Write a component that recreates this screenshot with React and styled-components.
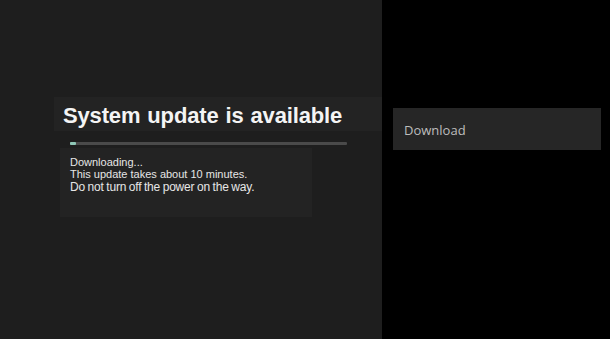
import React from 'react'
import styled, { createGlobalStyle } from 'styled-components'

const Global = createGlobalStyle`
  html, body { margin: 0; padding: 0; background: #000; }
  #root { height: 339px; }
`

const Screen = styled.div`
  display: flex;
  width: 610px;
  height: 339px;
  overflow: hidden;
  font-family: "Liberation Sans", Arial, sans-serif;
`

const LeftPanel = styled.div`
  width: 382px;
  background: #1e1e1e;
  display: flex;
  flex-direction: column;
  padding-top: 97px;
  box-sizing: border-box;
`

const TitleBar = styled.div`
  margin-left: 54px;
  height: 34px;
  background: #232323;
  display: flex;
  align-items: center;
  padding: 3px 0 0 9px;
  box-sizing: border-box;
`

const Title = styled.h1`
  margin: 0;
  font-size: 22px;
  font-weight: bold;
  color: #f4f4f4;
  letter-spacing: -0.15px;
  word-spacing: 1px;
`

const Progress = styled.div`
  margin: 11px 0 0 70px;
  width: 277px;
  height: 3px;
  background: #4a4a4a;
  border-radius: 1px;
`

const ProgressFill = styled.div`
  height: 100%;
  background: #8fc7b7;
  border-radius: 1px;
`

const InfoBox = styled.div`
  margin: 3px 0 0 60px;
  width: 252px;
  height: 69px;
  background: #232323;
  padding: 8px 0 0 10px;
  box-sizing: border-box;
  color: #e6e6e6;
`

const InfoLine = styled.div`
  font-size: ${p => p.$size || 11}px;
  line-height: ${p => p.$lh || 12}px;
  letter-spacing: ${p => p.$ls || 0}px;
  word-spacing: ${p => p.$ws || 0}px;
`

const RightPanel = styled.div`
  flex: 1;
  background: #000;
  padding: 108px 0 0 11px;
  box-sizing: border-box;
`

const DownloadButton = styled.div`
  width: 208px;
  height: 42px;
  background: #262626;
  display: flex;
  align-items: center;
  padding: 1px 0 0 11px;
  box-sizing: border-box;
  font-family: "Open Sans", "Noto Sans", sans-serif;
  font-size: 13px;
  color: #bdbdbd;
`

export default function App() {
  return (
    <>
      <Global />
      <Screen>
        <LeftPanel>
          <TitleBar>
            <Title>System update is available</Title>
          </TitleBar>
          <Progress>
            <ProgressFill style={{ width: `${(6 / 277) * 100}%` }} />
          </Progress>
          <InfoBox>
            <InfoLine>Downloading...</InfoLine>
            <InfoLine>This update takes about 10 minutes.</InfoLine>
            <InfoLine $size={12} $lh={14} $ls={-0.2} $ws={-0.5}>Do not turn off the power on the way.</InfoLine>
          </InfoBox>
        </LeftPanel>
        <RightPanel>
          <DownloadButton>Download</DownloadButton>
        </RightPanel>
      </Screen>
    </>
  )
}
